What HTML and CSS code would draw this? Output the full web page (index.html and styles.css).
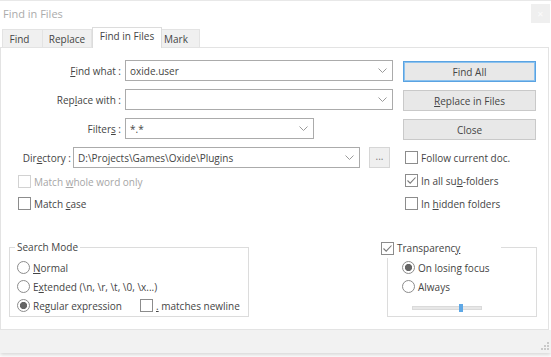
FILE: index.html
```html
<!DOCTYPE html>
<html lang="en">
<head>
    <meta charset="UTF-8">
    <title>Find in Files</title>
    <link rel="stylesheet" href="styles.css">
</head>
<body>
    <div class="window">
        <div class="titlebar">
            <span class="title">Find in Files</span>
            <span class="close">&#x2715;</span>
        </div>

        <div class="tabs">
            <div class="tab tab-find">Find</div>
            <div class="tab tab-replace">Replace</div>
            <div class="tab tab-files active">Find in Files</div>
            <div class="tab tab-mark">Mark</div>
        </div>

        <div class="panel">
            <div class="top">
                <div class="form">
                    <div class="row">
                        <span class="lbl"><u>F</u>ind what :</span>
                        <div class="combo wide">
                            <span class="val">oxide.user</span>
                            <svg class="chev" width="9" height="5" viewBox="0 0 9 5"><path d="M0.5 0.5 L4.5 4.5 L8.5 0.5" fill="none" stroke="#9a9a9a"/></svg>
                        </div>
                    </div>
                    <div class="row">
                        <span class="lbl">Rep<u>l</u>ace with :</span>
                        <div class="combo wide">
                            <span class="val"></span>
                            <svg class="chev" width="9" height="5" viewBox="0 0 9 5"><path d="M0.5 0.5 L4.5 4.5 L8.5 0.5" fill="none" stroke="#9a9a9a"/></svg>
                        </div>
                    </div>
                    <div class="row">
                        <span class="lbl">Filter<u>s</u> :</span>
                        <div class="combo filters">
                            <span class="val">*.*</span>
                            <svg class="chev" width="9" height="5" viewBox="0 0 9 5"><path d="M0.5 0.5 L4.5 4.5 L8.5 0.5" fill="none" stroke="#9a9a9a"/></svg>
                        </div>
                    </div>
                    <div class="row">
                        <span class="lbl lbl-dir">Dir<u>e</u>ctory :</span>
                        <div class="combo dir">
                            <span class="val">D:\Projects\Games\Oxide\Plugins</span>
                            <svg class="chev" width="9" height="5" viewBox="0 0 9 5"><path d="M0.5 0.5 L4.5 4.5 L8.5 0.5" fill="none" stroke="#9a9a9a"/></svg>
                        </div>
                        <div class="browse">...</div>
                    </div>
                    <div class="checks form-checks">
                        <div class="check disabled"><span class="box"></span><span>Match <u>w</u>hole word only</span></div>
                        <div class="check"><span class="box"></span><span>Match <u>c</u>ase</span></div>
                    </div>
                </div>

                <div class="actions">
                    <div class="btn default">Find All</div>
                    <div class="btn"><span><u>R</u>eplace in Files</span></div>
                    <div class="btn">Close</div>
                    <div class="checks action-checks">
                        <div class="check"><span class="box"></span><span>Follow current doc.</span></div>
                        <div class="check">
                            <span class="box">
                                <svg width="11" height="11" viewBox="0 0 11 11"><path d="M1.5 5.5 L4.2 8.2 L9.5 2.5" fill="none" stroke="#7a7a7a" stroke-width="1.1"/></svg>
                            </span>
                            <span>In all su<u>b</u>-folders</span>
                        </div>
                        <div class="check"><span class="box"></span><span>In <u>h</u>idden folders</span></div>
                    </div>
                </div>
            </div>

            <div class="bottom">
                <div class="group mode">
                    <span class="legend">Search Mode</span>
                    <div class="radio"><span class="dot"></span><span><u>N</u>ormal</span></div>
                    <div class="radio"><span class="dot"></span><span>E<u>x</u>tended (\n, \r, \t, \0, \x...)</span></div>
                    <div class="radio-row">
                        <div class="radio regex"><span class="dot on"></span><span>Re<u>g</u>ular expression</span></div>
                        <span class="box"></span>
                        <span><u>.</u> matches newline</span>
                    </div>
                </div>

                <div class="group transp">
                    <div class="legend legend-check">
                        <span class="box">
                            <svg width="11" height="11" viewBox="0 0 11 11"><path d="M1.5 5.5 L4.2 8.2 L9.5 2.5" fill="none" stroke="#7a7a7a" stroke-width="1.1"/></svg>
                        </span>
                        <span>Transparenc<u>y</u></span>
                    </div>
                    <div class="radio"><span class="dot on"></span><span>On losing focus</span></div>
                    <div class="radio"><span class="dot"></span><span>Always</span></div>
                    <div class="slider">
                        <span class="thumb"></span>
                    </div>
                </div>
            </div>
        </div>

        <div class="status">
            <svg width="9" height="9" viewBox="0 0 9 9">
                <rect x="6" y="0" width="2" height="2" fill="#c9c9c9"/>
                <rect x="3" y="3" width="2" height="2" fill="#c9c9c9"/>
                <rect x="6" y="3" width="2" height="2" fill="#c9c9c9"/>
                <rect x="0" y="6" width="2" height="2" fill="#c9c9c9"/>
                <rect x="3" y="6" width="2" height="2" fill="#c9c9c9"/>
                <rect x="6" y="6" width="2" height="2" fill="#c9c9c9"/>
            </svg>
        </div>
    </div>
</body>
</html>
```

FILE: styles.css
```css
* {
    margin: 0;
    padding: 0;
    box-sizing: border-box;
}

body {
    width: 551px;
    height: 357px;
    background: #ffffff;
    font-family: "Open Sans", "Noto Sans", sans-serif;
    font-size: 10px;
    color: #454545;
    overflow: hidden;
}

u {
    text-decoration-thickness: 1px;
    text-underline-offset: 1px;
}

.window {
    width: 551px;
    height: 353px;
    background: #ffffff;
    border-top: 1px solid #e8e8e8;
    box-shadow: 0 2px 4px rgba(0, 0, 0, 0.16);
    display: flex;
    flex-direction: column;
}

/* Title bar */
.titlebar {
    height: 26px;
    display: flex;
    justify-content: space-between;
    align-items: flex-start;
    flex: 0 0 auto;
}

.title {
    padding: 5px 0 0 3px;
    font-size: 11px;
    line-height: 16px;
    color: #ababab;
}

.close {
    width: 19px;
    height: 19px;
    margin: 3px 1px 0 0;
    background: #efefef;
    color: #fbfbfb;
    font-size: 8px;
    line-height: 19px;
    text-align: center;
}

/* Tabs */
.tabs {
    height: 20px;
    padding-left: 2px;
    display: flex;
    align-items: flex-end;
    position: relative;
    z-index: 1;
    flex: 0 0 auto;
}

.tab {
    height: 18px;
    padding-top: 2px;
    line-height: 14px;
    background: #f0f0f0;
    border: 1px solid #e3e3e3;
    border-bottom: none;
    text-align: center;
}

.tab + .tab {
    border-left: none;
}

.tab-find { width: 41px; padding-right: 6px; }
.tab-replace { width: 49px; }
.tab-files { width: 70px; }
.tab-mark { width: 38px; padding-right: 9px; }

.tab.active {
    height: 21px;
    margin-bottom: -1px;
    padding-top: 1px;
    background: #ffffff;
    border: 1px solid #dcdcdc;
    border-bottom: none;
}

/* Panel */
.panel {
    width: 549px;
    height: 283px;
    border: 1px solid #e3e3e3;
    flex: 0 0 auto;
}

.top {
    height: 199px;
    padding-top: 12px;
    display: flex;
}

.form {
    width: 392px;
}

.row {
    height: 21px;
    display: flex;
    align-items: center;
}

.row + .row {
    margin-top: 8px;
}

.lbl {
    width: 120px;
    margin-right: 4px;
    text-align: right;
    white-space: nowrap;
}

.lbl-dir {
    width: 70px;
    margin-right: 2px;
}

.combo {
    height: 21px;
    padding-left: 4px;
    border: 1px solid #ababab;
    display: flex;
    align-items: center;
}

.combo .val {
    flex: 1;
    white-space: nowrap;
}

.combo .chev {
    margin-right: 5px;
}

.combo.wide { width: 268px; }
.combo.filters { width: 189px; }
.combo.dir { width: 287px; }

.browse {
    width: 21px;
    height: 21px;
    margin-left: 9px;
    background: #efefef;
    border: 1px solid #d6d6d6;
    color: #7a7a7a;
    line-height: 17px;
    text-align: center;
}

/* Checkboxes */
.checks {
    display: flex;
    flex-direction: column;
}

.form-checks {
    gap: 9px;
    margin: 7px 0 0 17px;
}

.check {
    height: 13px;
    display: flex;
    align-items: center;
    white-space: nowrap;
}

.check.disabled {
    color: #a6a6a6;
}

.box {
    width: 13px;
    height: 13px;
    margin-right: 3px;
    border: 1px solid #8c8c8c;
    background: #ffffff;
    display: flex;
    align-items: center;
    justify-content: center;
    flex: 0 0 auto;
}

.check.disabled .box {
    border-color: #d2d2d2;
}

/* Buttons */
.actions {
    width: 133px;
    margin-left: 10px;
    padding-top: 1px;
}

.btn {
    height: 21px;
    background: #e8e8e8;
    border: 1px solid #c9c9c9;
    display: flex;
    align-items: center;
    justify-content: center;
}

.btn + .btn {
    margin-top: 8px;
}

.btn.default {
    border-color: #5aa3e2;
    box-shadow: inset 0 0 0 1px #8cc2ee;
}

.action-checks {
    gap: 10px;
    margin: 11px 0 0 2px;
}

/* Group boxes */
.bottom {
    height: 70px;
    padding-left: 8px;
    display: flex;
}

.group {
    height: 70px;
    border: 1px solid #dcdcdc;
    position: relative;
    display: flex;
    flex-direction: column;
    gap: 6px;
}

.mode {
    width: 240px;
    padding: 13px 0 0 7px;
}

.transp {
    width: 150px;
    margin-left: 138px;
    padding: 13px 0 0 14px;
}

.legend {
    position: absolute;
    top: -7px;
    left: 5px;
    padding: 0 2px;
    line-height: 13px;
    background: #ffffff;
}

.legend-check {
    top: -10px;
    left: -7px;
    width: 120px;
    height: 20px;
    padding: 0;
    display: flex;
    align-items: center;
}

.radio,
.radio-row {
    height: 13px;
    display: flex;
    align-items: center;
    white-space: nowrap;
}

.radio.regex {
    width: 123px;
}

.dot {
    width: 13px;
    height: 13px;
    margin-right: 3px;
    border: 1px solid #8c8c8c;
    border-radius: 50%;
    background: #ffffff;
    flex: 0 0 auto;
}

.dot.on {
    background: radial-gradient(circle, #666666 0 3.3px, #ffffff 3.9px);
}

.slider {
    width: 70px;
    height: 4px;
    margin: 7px 0 0 10px;
    background: #e7e7e7;
    border: 1px solid #dadada;
    position: relative;
}

.thumb {
    position: absolute;
    left: 46px;
    top: -3px;
    width: 4px;
    height: 8px;
    background: #5ea8e6;
}

/* Status bar */
.status {
    height: 23px;
    padding: 0 1px 2px 0;
    background: #f2f2f2;
    display: flex;
    justify-content: flex-end;
    align-items: flex-end;
    flex: 0 0 auto;
}
```
